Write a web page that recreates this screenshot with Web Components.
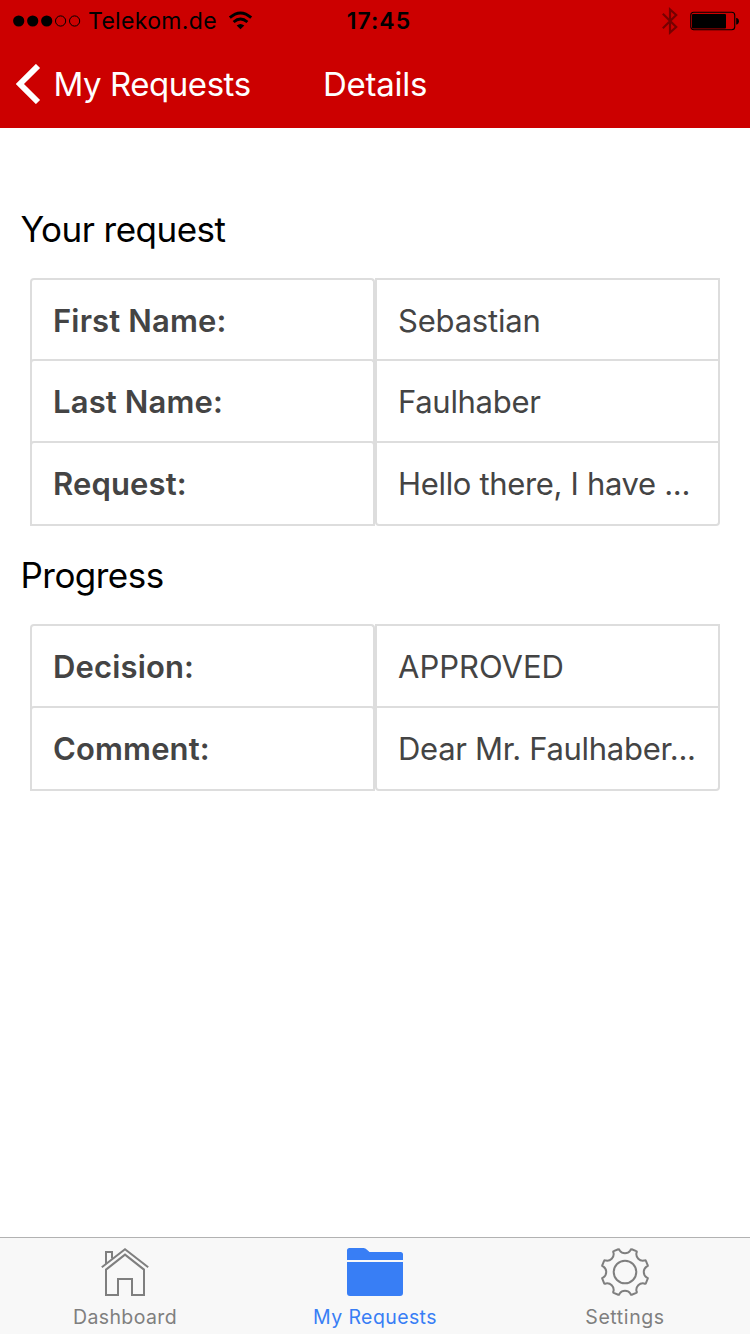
<!DOCTYPE html>
<html lang="en"><head><meta charset="utf-8"><title>Details</title>
<style>
html,body{margin:0;height:100%;background:#fff;overflow:hidden}
body{font-family:Inter,"Liberation Sans",sans-serif;color:#000}
</style></head><body>
<app-screen></app-screen>
<script>
const define=(name,html,setup)=>customElements.define(name,class extends HTMLElement{
  constructor(){super();this.attachShadow({mode:'open'}).innerHTML=html;}
  connectedCallback(){if(setup)setup(this,this.shadowRoot);}
});

define('status-bar',`<style>
:host{display:grid;grid-template-columns:1fr auto 1fr;height:40px;align-items:center;color:#000;font-size:23px;line-height:40px;padding:1px 11px 0 13px}
.l,.r{display:flex;align-items:center}.r{justify-content:flex-end;gap:10px}
svg{display:block}.c{margin-left:7px;letter-spacing:.33px}.t{font-weight:600;letter-spacing:1px;font-size:23px;margin-left:6px}
.d{margin-top:-1px}.w{margin-left:11.5px;margin-top:-1px}
</style>
<div class="l"><svg class="d" width="68" height="12" viewBox="0 0 68 12"><circle cx="5.7" cy="6" r="5.6"/><circle cx="19.7" cy="6" r="5.6"/><circle cx="33.7" cy="6" r="5.6"/><g fill="none" stroke="#000"><circle cx="47.6" cy="6" r="5.1"/><circle cx="61.6" cy="6" r="5.1"/></g></svg>
<span class="c">Telekom.de</span>
<svg class="w" width="25" height="19" viewBox="0 0 25 19"><path d="M8.7 14.4Q12.5 11.4 16.3 14.4L12.5 18.3Z"/><g fill="none" stroke="#000" stroke-width="2.9"><path d="M1.8 6.7Q12.5-2.9 23.2 6.7"/><path d="M5.6 11Q12.5 5 19.4 11"/></g></svg></div>
<span class="t">17:45</span>
<div class="r"><svg width="18" height="28" viewBox="0 0 18 28"><path d="M.8 6.8L14.2 20L8 25.5V2.5L14.2 8L.8 21.2" fill="none" stroke="#000" stroke-opacity=".42" stroke-width="2.2"/></svg>
<svg width="49" height="20" viewBox="0 0 49 20"><rect x=".75" y="1.25" width="44" height="17.5" rx="3" fill="none" stroke="#000" stroke-width="1.1"/><rect x="2" y="3" width="34" height="14.5" rx="1"/><path d="M46.2 7H47Q49 8 49 10.2T47 13.5H46.2Z"/></svg></div>`);

define('nav-bar',`<style>
:host{display:grid;grid-template-columns:1fr auto 1fr;height:86px;align-items:center;color:#fff;font-size:33px;line-height:86px;padding:0 16px 1px}
.b{display:flex;align-items:center}svg{display:block}.b span{margin-left:12.5px;letter-spacing:-.45px}
.t{letter-spacing:-.25px}
</style><div class="b"><svg width="25" height="40" viewBox="0 0 25 40"><path d="M22 2L3.9 20L22 38" fill="none" stroke="#fff" stroke-width="5.9"/></svg><span><slot name="back"></slot></span></div><span class="t"><slot></slot></span>`);

define('section-title',`<style>:host{display:block;font-size:35px;line-height:42px;padding:0 0 2px 20.5px;color:#000;letter-spacing:-.53px}</style><slot></slot>`);

define('detail-table',`<style>:host{display:block;margin:0 30px}</style><slot></slot>`);

define('detail-row',`<style>
:host{display:grid;grid-template-columns:345px 345px;height:var(--h,82px);color:#444;font-size:31px;line-height:82px}
div{box-sizing:border-box;border:2px solid #ddd;border-bottom:0;padding:0 21px 0 21px;white-space:nowrap;overflow:hidden}
:host(:not([last])) div{margin-bottom:-4px}
.k{font-weight:600;border-radius:4px 4px 0 0;letter-spacing:.15px}.v{letter-spacing:var(--ls,-.2px)}
:host([last]) div{border-bottom:2px solid #ddd}:host([last]) .v{border-radius:0 0 4px 4px}
</style><div class="k"><slot name="key"></slot></div><div class="v"><slot></slot></div>`);

define('tab-icon',`<style>:host{display:block;width:60px;height:52px}svg{display:block}</style><svg width="60" height="52" viewBox="0 0 60 52"></svg>`,(el,root)=>{
  const line='fill="none" stroke="#7f7f7f" stroke-width="2"';
  let body='';
  if(el.getAttribute('name')==='home') body=`<g ${line}><path d="M6.8 21.2L30 3.2L53.2 21.2"/><path d="M11 18V6H17V12.5"/><path d="M11 23.6L30 8.6L49 23.6V49H37V33H23V49H11Z"/></g>`;
  if(el.getAttribute('name')==='folder') body='<path fill="#387ef5" d="M2 14V4.5Q2 2 4.5 2H18.5Q20.5 2 22 3.8L24.5 6H55.5Q58 6 58 8.5V14ZM2 16H58V47Q58 50 55 50H5Q2 50 2 47Z"/>';
  if(el.getAttribute('name')==='gear'){
    const p=(r,a)=>{a*=Math.PI/180;return (30+r*Math.sin(a)).toFixed(2)+' '+(26-r*Math.cos(a)).toFixed(2)};
    let d='';
    for(let k=0;k<8;k++){const a=22.5+45*k;
      d+=(k?'L':'M')+p(22.2,a-8.5)+'Q'+p(23.9,a-8.5)+' '+p(23.7,a-6)+'L'+p(23.7,a+6)+'Q'+p(23.9,a+8.5)+' '+p(22.2,a+8.5)+'A6.6 6.6 0 0 0 '+p(22.2,a+36.5);}
    body=`<path ${line} stroke-linejoin="round" d="${d}Z"/><circle ${line} cx="30" cy="26" r="11.3"/>`;
  }
  root.querySelector('svg').innerHTML=body;
});

define('tab-item',`<style>
:host{display:flex;flex-direction:column;align-items:center;flex:1;padding-top:8px;color:#7f7f7f;font-size:19.5px;letter-spacing:var(--ls,.4px)}
:host([active]){color:#387ef5}span{line-height:26px;margin-top:6px}
</style><slot name="icon"></slot><span><slot></slot></span>`);

define('tab-bar',`<style>:host{display:flex;box-sizing:border-box;height:97px;border-top:1px solid #b2b2b2;background:#f8f8f8}</style><slot></slot>`);

define('app-screen',`<style>
:host{display:flex;flex-direction:column;width:750px;height:1334px;background:#fff}
header{background:#c00;height:128px}main{flex:1;padding-top:80px}
.one{margin-top:26px}.two{margin-top:26px}.p{margin-top:28px}
</style>
<header><status-bar></status-bar><nav-bar><span slot="back">My Requests</span>Details</nav-bar></header>
<main><section-title>Your request</section-title>
<detail-table class="one"><detail-row style="--h:81px"><span slot="key">First Name:</span>Sebastian</detail-row>
<detail-row style="--ls:-.3px"><span slot="key">Last Name:</span>Faulhaber</detail-row>
<detail-row last style="--h:85px;--ls:-.33px"><span slot="key">Request:</span>Hello there, I have ...</detail-row></detail-table>
<section-title class="p">Progress</section-title>
<detail-table class="two"><detail-row style="--ls:0px"><span slot="key">Decision:</span>APPROVED</detail-row>
<detail-row last style="--h:85px;--ls:-.3px"><span slot="key">Comment:</span>Dear Mr. Faulhaber...</detail-row></detail-table></main>
<tab-bar><tab-item><tab-icon slot="icon" name="home"></tab-icon>Dashboard</tab-item>
<tab-item active><tab-icon slot="icon" name="folder"></tab-icon>My Requests</tab-item>
<tab-item style="--ls:.6px"><tab-icon slot="icon" name="gear"></tab-icon>Settings</tab-item></tab-bar>`);
</script></body></html>
